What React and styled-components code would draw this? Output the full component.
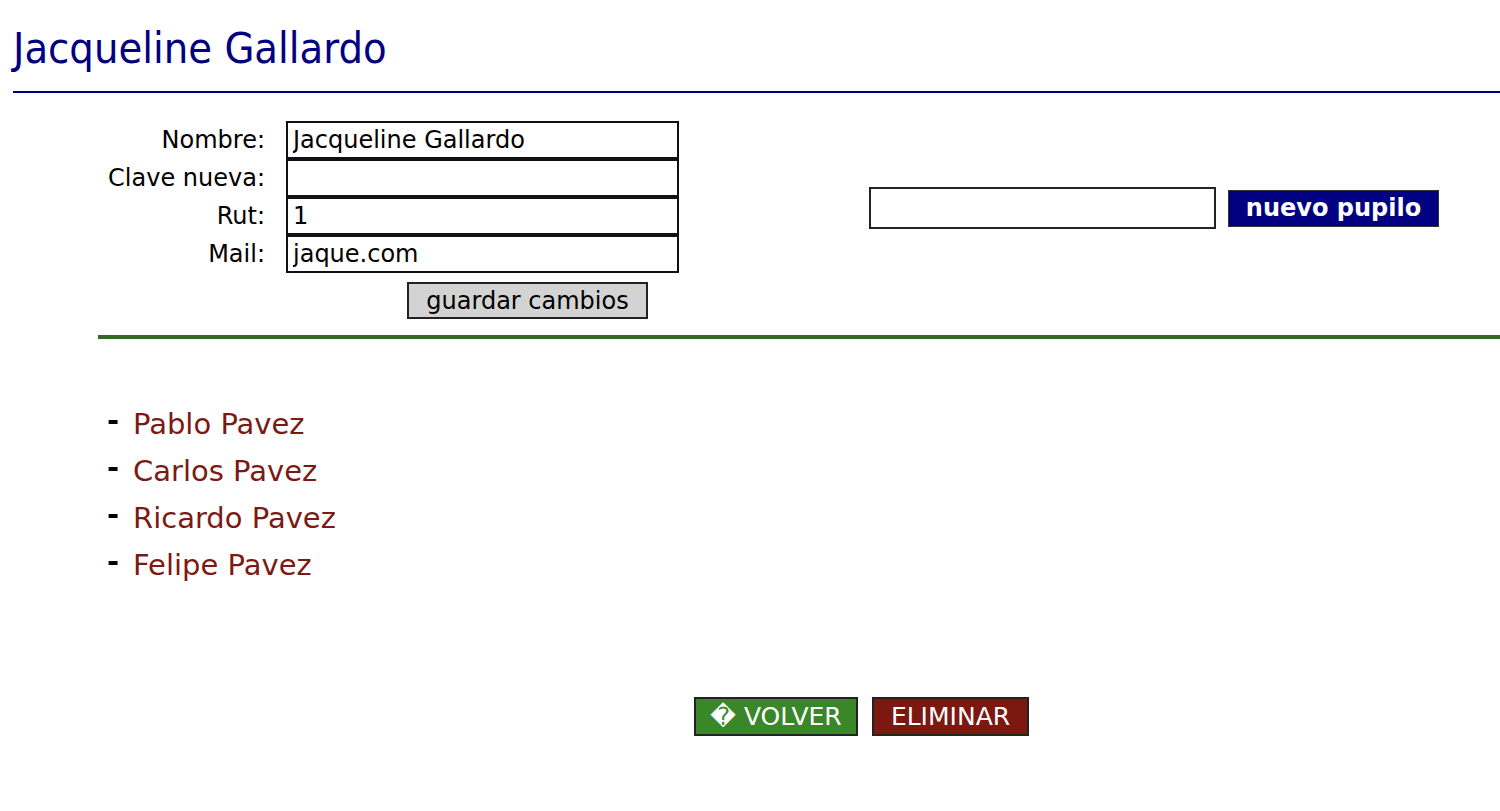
import React from "react";
import styled, { createGlobalStyle } from "styled-components";

const NARROW = `"DejaVu Sans Condensed", "DejaVu Sans", Tahoma, sans-serif`;
const WIDE = `"DejaVu Sans", Verdana, sans-serif`;

const Global = createGlobalStyle`
  html, body { margin: 0; padding: 0; background: #fff; }
  body { font-family: ${WIDE}; color: #000; }
`;

const Page = styled.div`
  width: 1500px;
  min-height: 811px;
  padding-top: 22px;
`;

const Title = styled.h1`
  margin: 0 0 0 13px;
  font-family: ${NARROW};
  font-size: 43px;
  font-weight: normal;
  color: #000080;
  line-height: 52px;
`;

const BlueRule = styled.div`
  margin: 17px 0 0 13px;
  height: 2px;
  background: #000080;
`;

const TopRow = styled.div`
  display: flex;
  align-items: flex-start;
  margin-top: 28px;
  padding-left: 98px;
`;

const FormGrid = styled.div`
  display: grid;
  grid-template-columns: 167px 393px;
  column-gap: 21px;
  align-items: center;
`;

const Label = styled.label`
  text-align: right;
  font-size: 24px;
  line-height: 38px;
  white-space: nowrap;
`;

const Field = styled.input`
  box-sizing: border-box;
  width: 393px;
  height: 38px;
  border: 2px solid #111;
  padding: 0 5px;
  font-family: ${WIDE};
  font-size: 24px;
  color: #000;
  background: #fff;
  outline: none;
`;

const SaveButton = styled.button`
  grid-column: 2;
  justify-self: start;
  margin: 9px 0 0 121px;
  width: 241px;
  height: 37px;
  background: #d3d3d3;
  border: 2px solid #222;
  font-family: ${WIDE};
  font-size: 24px;
  color: #000;
  padding: 0;
`;

const SideForm = styled.div`
  display: flex;
  align-items: center;
  gap: 12px;
  margin-left: 190px;
  margin-top: 66px;
`;

const SideInput = styled.input`
  box-sizing: border-box;
  width: 347px;
  height: 42px;
  border: 2px solid #222;
  background: #fff;
  outline: none;
`;

const NavyButton = styled.button`
  width: 211px;
  height: 37px;
  background: #000080;
  color: #fff;
  border: 1px solid #333;
  font-family: ${WIDE};
  font-weight: bold;
  font-size: 24px;
  padding: 0;
`;

const GreenRule = styled.div`
  margin: 16px 0 0 98px;
  height: 4px;
  background: #2f6b20;
`;

const List = styled.ul`
  list-style: none;
  margin: 62px 0 0 107px;
  padding: 0;
`;

const Item = styled.li`
  display: flex;
  align-items: baseline;
  height: 47px;
  font-size: 29px;
  line-height: 47px;
`;

const Dash = styled.span`
  width: 26px;
  color: #000;
  font-weight: bold;
  position: relative;
  top: -4px;
`;

const Name = styled.a`
  color: #7b1a12;
  text-decoration: none;
  cursor: pointer;
`;

const Actions = styled.div`
  display: flex;
  gap: 14px;
  margin: 108px 0 0 694px;
`;

const ActionButton = styled.button`
  height: 39px;
  width: ${(p) => p.$w}px;
  background: ${(p) => p.$bg};
  color: #fff;
  border: 2px solid #222;
  font-family: ${WIDE};
  font-size: 25px;
  padding: 0;
`;

const names = ["Pablo Pavez", "Carlos Pavez", "Ricardo Pavez", "Felipe Pavez"];

export default function App() {
  return (
    <Page>
      <Global />
      <Title>Jacqueline Gallardo</Title>
      <BlueRule />
      <TopRow>
        <FormGrid>
          <Label>Nombre:</Label>
          <Field defaultValue="Jacqueline Gallardo" />
          <Label>Clave nueva:</Label>
          <Field type="password" />
          <Label>Rut:</Label>
          <Field defaultValue="1" />
          <Label>Mail:</Label>
          <Field defaultValue="jaque.com" />
          <SaveButton>guardar cambios</SaveButton>
        </FormGrid>
        <SideForm>
          <SideInput />
          <NavyButton>nuevo pupilo</NavyButton>
        </SideForm>
      </TopRow>
      <GreenRule />
      <List>
        {names.map((n) => (
          <Item key={n}>
            <Dash>-</Dash>
            <Name>{n}</Name>
          </Item>
        ))}
      </List>
      <Actions>
        <ActionButton $w={164} $bg="#3a872a">{"\uFFFD"} VOLVER</ActionButton>
        <ActionButton $w={157} $bg="#7d1810">ELIMINAR</ActionButton>
      </Actions>
    </Page>
  );
}
